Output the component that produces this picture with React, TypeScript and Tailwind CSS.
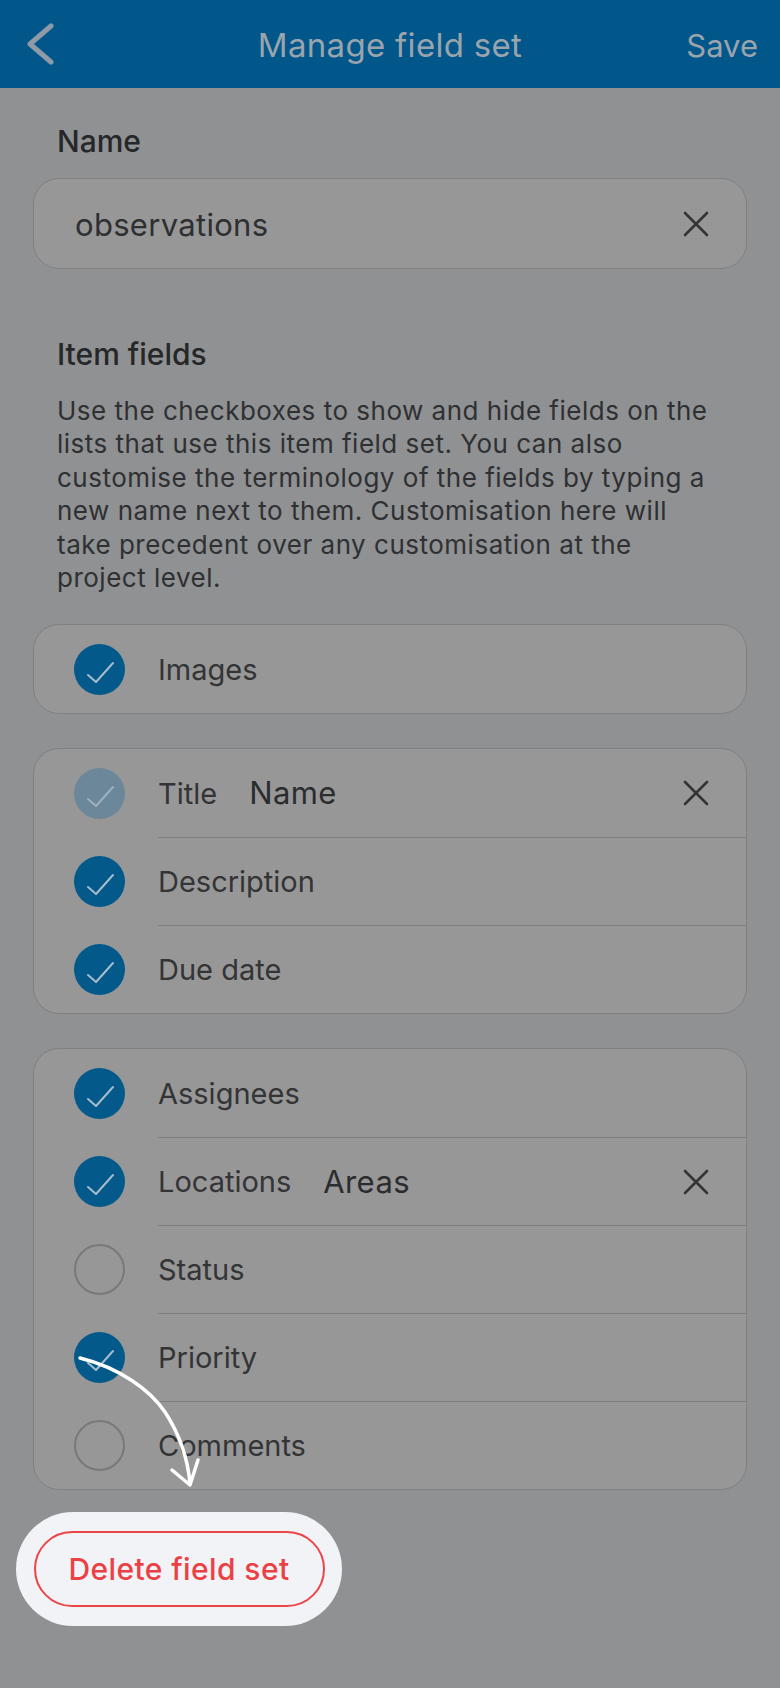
import { ReactNode } from "react";

type Field = {
    label: string;
    checked?: boolean;
    faded?: boolean;
    custom?: string;
};

function Check({ checked, faded }: { checked?: boolean; faded?: boolean }) {
    if (!checked) {
        return <div className="w-[51px] h-[51px] rounded-full border-2 border-[#79797a] shrink-0" />;
    }
    return (
        <div
            className={
                "w-[51px] h-[51px] rounded-full shrink-0 " + (faded ? "bg-[#6c8799]" : "bg-[#03598a]")
            }
        >
            <svg width="51" height="51" viewBox="0 0 51 51" fill="none">
                <path
                    d="M14 31 L22 38 L39 19"
                    stroke={faded ? "#9db0bd" : "#a7bccc"}
                    strokeWidth="2"
                    strokeLinecap="round"
                    strokeLinejoin="round"
                />
            </svg>
        </div>
    );
}

function CloseIcon() {
    return (
        <svg width="26" height="26" viewBox="0 0 26 26" className="shrink-0">
            <path d="M2 2 L24 24 M24 2 L2 24" stroke="#333435" strokeWidth="2.6" strokeLinecap="round" />
        </svg>
    );
}

function Card({ children }: { children: ReactNode }) {
    return (
        <div className="rounded-[26px] border-[1.5px] border-[#7f8081] bg-[#979798] overflow-hidden">
            {children}
        </div>
    );
}

function FieldRow({ field, first }: { field: Field; first: boolean }) {
    return (
        <div className="flex items-stretch h-[88px]">
            <div className="pl-[40px] pr-[33px] flex items-center">
                <Check checked={field.checked} faded={field.faded} />
            </div>
            <div
                className={
                    "flex-1 flex items-center pr-[37px] " + (first ? "" : "border-t-[1.5px] border-[#7c7d7e]")
                }
            >
                <span className="text-[29px] text-[#333435]">{field.label}</span>
                {field.custom && (
                    <span className="ml-[32px] text-[31px] tracking-[0.4px] text-[#2b2c2d]">{field.custom}</span>
                )}
                <div className="flex-1" />
                {field.custom && <CloseIcon />}
            </div>
        </div>
    );
}

const groups: Field[][] = [
    [{ label: "Images", checked: true }],
    [
        { label: "Title", checked: true, faded: true, custom: "Name" },
        { label: "Description", checked: true },
        { label: "Due date", checked: true },
    ],
    [
        { label: "Assignees", checked: true },
        { label: "Locations", checked: true, custom: "Areas" },
        { label: "Status" },
        { label: "Priority", checked: true },
        { label: "Comments" },
    ],
];

const helpLines = [
    "Use the checkboxes to show and hide fields on the",
    "lists that use this item field set. You can also",
    "customise the terminology of the fields by typing a",
    "new name next to them. Customisation here will",
    "take precedent over any customisation at the",
    "project level.",
];

export default function App() {
    return (
        <div
            className="relative w-[780px] h-[1688px] bg-[#909193] overflow-hidden"
            style={{ fontFamily: "Inter, 'Noto Sans', sans-serif" }}
        >
            {/* Header */}
            <div className="h-[88px] bg-[#01568a] grid grid-cols-[1fr_auto_1fr] items-center">
                <div className="pl-[26px] flex items-center">
                    <svg width="30" height="42" viewBox="0 0 30 42" fill="none">
                        <path d="M25 3 L4 21 L25 39" stroke="#8e9aa5" strokeWidth="5" strokeLinecap="round" strokeLinejoin="round" />
                    </svg>
                </div>
                <div className="text-[33px] tracking-[0.3px] text-[#9aa4ad] pt-[3px]">Manage field set</div>
                <div className="text-right pr-[22px] text-[31px] text-[#9aa4ad] pt-[4px]">Save</div>
            </div>

            <div className="px-[33px]">
                <div className="pl-[24px] pt-[35px] text-[30px] font-medium text-[#262728] leading-[36px]">Name</div>
                <div className="mt-[19px] h-[91px] rounded-[26px] border-[1.5px] border-[#808182] bg-[#979798] flex items-center pl-[41px] pr-[37px]">
                    <span className="flex-1 pt-[4px] text-[31px] tracking-[0.3px] text-[#2e2f30]">observations</span>
                    <CloseIcon />
                </div>

                <div className="pl-[24px] mt-[67px] text-[30px] font-medium text-[#262728] leading-[36px]">Item fields</div>
                <div className="pl-[24px] mt-[22px] text-[26px] tracking-[0.5px] leading-[33.4px] text-[#2f3031]">
                    {helpLines.map((l) => (
                        <div key={l} className="whitespace-nowrap">
                            {l}
                        </div>
                    ))}
                </div>

                <div className="mt-[30px] flex flex-col gap-[34px]">
                    {groups.map((g, gi) => (
                        <Card key={gi}>
                            {g.map((f, i) => (
                                <FieldRow key={f.label} field={f} first={i === 0} />
                            ))}
                        </Card>
                    ))}
                </div>
            </div>

            {/* Highlighted delete button */}
            <div className="mt-[22px] ml-[16px] w-[326px] h-[114px] rounded-full bg-[#f2f3f7] flex items-center justify-center">
                <button className="w-[291px] h-[76px] rounded-full border-2 border-[#ec4548] text-[30px] tracking-[0.4px] font-medium text-[#ea4145]">
                    Delete field set
                </button>
            </div>

            {/* Annotation arrow */}
            <svg className="absolute left-0 top-0 pointer-events-none" width="780" height="1688" fill="none">
                <path
                    d="M80 1358 C 120 1368, 150 1390, 165 1412 C 180 1435, 188 1460, 190 1484"
                    stroke="white"
                    strokeWidth="3.5"
                    strokeLinecap="round"
                />
                <path d="M172 1470 L190 1485 L198 1460" stroke="white" strokeWidth="3.5" strokeLinecap="round" strokeLinejoin="round" />
            </svg>
        </div>
    );
}
